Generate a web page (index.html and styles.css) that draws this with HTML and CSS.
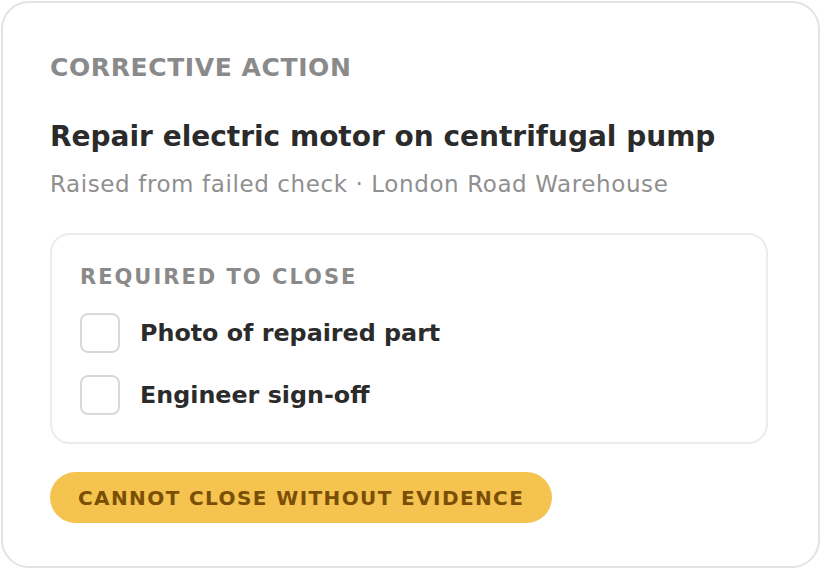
FILE: index.html
```html
<!DOCTYPE html>
<html>
<head>
<meta charset="utf-8">
<link rel="stylesheet" href="styles.css">
</head>
<body>
<div class="card">
  <div class="eyebrow">CORRECTIVE ACTION</div>
  <h1 class="title">Repair electric motor on centrifugal pump</h1>
  <div class="meta">Raised from failed check · London Road Warehouse</div>
  <div class="required">
    <div class="req-head">REQUIRED TO CLOSE</div>
    <div class="req-list">
      <div class="req-row"><span class="check"></span><span class="req-label">Photo of repaired part</span></div>
      <div class="req-row"><span class="check"></span><span class="req-label">Engineer sign-off</span></div>
    </div>
  </div>
  <div class="badge">CANNOT CLOSE WITHOUT EVIDENCE</div>
</div>
</body>
</html>
```
FILE: styles.css
```css
* { box-sizing: border-box; }
html, body { margin: 0; padding: 0; background: #ffffff; }
body { font-family: "DejaVu Sans", sans-serif; }
.card {
  margin: 1px;
  width: 819px;
  height: 567px;
  border: 2px solid #e3e3e3;
  border-radius: 28px;
  padding: 50px 47px 0 47px;
  background: #fff;
}
.eyebrow {
  font-size: 25px;
  line-height: 30px;
  font-weight: 600;
  letter-spacing: 0.6px;
  color: #8a8a8a;
}
.title {
  margin: 36px 0 0 0;
  font-size: 28px;
  line-height: 36px;
  font-weight: 700;
  color: #2b2b2b;
}
.meta {
  margin-top: 15px;
  font-size: 23px;
  line-height: 28px;
  letter-spacing: 0.6px;
  color: #8f8f8f;
}
.required {
  margin-top: 35px;
  width: 718px;
  border: 2px solid #ececec;
  border-radius: 20px;
  padding: 28px 28px 27px 28px;
}
.req-head {
  font-size: 21px;
  line-height: 28px;
  font-weight: 700;
  letter-spacing: 2px;
  color: #8a8a8a;
}
.req-list {
  margin-top: 22px;
  display: flex;
  flex-direction: column;
  gap: 22px;
}
.req-row {
  display: flex;
  align-items: center;
  gap: 20px;
  height: 40px;
}
.check {
  width: 40px;
  height: 40px;
  border: 2px solid #d9d9d9;
  border-radius: 8px;
  flex: none;
}
.req-label {
  font-size: 23.8px;
  font-weight: 600;
  color: #2b2b2b;
}
.badge {
  margin-top: 28px;
  display: inline-flex;
  align-items: center;
  height: 51px;
  padding: 0 28px;
  border-radius: 26px;
  background: #f5c350;
  color: #7a4f05;
  font-size: 20px;
  font-weight: 700;
  letter-spacing: 1.4px;
}
```
